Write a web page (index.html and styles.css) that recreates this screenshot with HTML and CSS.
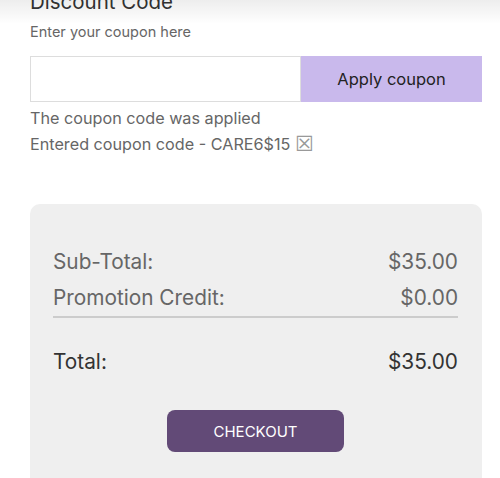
FILE: index.html
```html
<!DOCTYPE html>
<html>
<head>
<meta charset="utf-8">
<link rel="stylesheet" href="styles.css">
</head>
<body>
<div class="topshade"></div>
<div class="page">
  <h2 class="title">Discount Code</h2>
  <p class="hint">Enter your coupon here</p>
  <div class="coupon">
    <input class="coupon-input" type="text">
    <button class="coupon-btn">Apply coupon</button>
  </div>
  <p class="msg msg-first">The coupon code was applied</p>
  <p class="msg">Entered coupon code - CARE6$15 <span class="remove">☒</span></p>
  <div class="summary">
    <div class="row"><span>Sub-Total:</span><span>$35.00</span></div>
    <div class="row row-last"><span>Promotion Credit:</span><span>$0.00</span></div>
    <div class="row total"><span>Total:</span><span>$35.00</span></div>
    <div class="actions"><button class="checkout">CHECKOUT</button></div>
  </div>
</div>
</body>
</html>
```
FILE: styles.css
```css
html, body { margin: 0; padding: 0; background: #fff; }
body { font-family: Inter, "Liberation Sans", sans-serif; overflow: hidden; height: 478px; }
.topshade {
  position: absolute; left: 0; top: 0; right: 0; height: 24px;
  background: linear-gradient(to bottom, rgba(0,0,0,0.07), rgba(0,0,0,0));
  pointer-events: none;
}
.page { padding: 0 18px 0 30px; }
.title { margin: -11px 0 0; font-size: 20.5px; font-weight: 400; line-height: 26px; color: #333; }
.hint { margin: 8px 0 0; font-size: 14.5px; line-height: 18px; color: #666; }
.coupon { display: flex; margin-top: 15px; height: 46px; }
.coupon-input {
  box-sizing: border-box; width: 271px; height: 46px; margin: 0;
  border: 1px solid #ddd; background: #fff; outline: none;
}
.coupon-btn {
  flex: 1; border: 0; margin: 0; background: #c9b9ec; color: #222;
  font-family: inherit; font-size: 16.5px;
}
.msg { margin: 0; font-size: 16.2px; line-height: 26px; color: #666; }
.msg-first { margin-top: 3px; }
.remove { font-family: "DejaVu Sans", sans-serif; color: #999; font-size: 21px; line-height: 18px; vertical-align: -1px; }
.summary {
  box-sizing: border-box;
  margin-top: 47px; background: #efefef; border-radius: 10px 10px 0 0;
  padding: 40px 24px 0 23px; height: 280px;
}
.row { display: flex; justify-content: space-between; font-size: 20.8px; line-height: 36px; color: #666; }
.row-last { border-bottom: 2px solid #ccc; }
.total { color: #333; margin-top: 26px; }
.actions { display: flex; justify-content: center; margin-top: 30px; }
.checkout {
  width: 177px; height: 42px; border: 0; border-radius: 8px;
  background: #624a77; color: #fff; font-family: inherit; font-size: 15px;
}
```
